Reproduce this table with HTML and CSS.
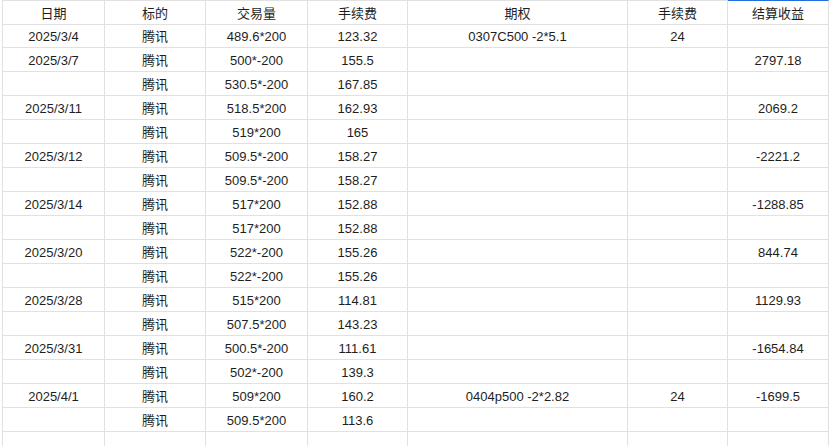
FILE: index.html
```html
<!DOCTYPE html>
<html lang="zh">
<head>
<meta charset="utf-8">
<link rel="stylesheet" href="styles.css">
</head>
<body>
<div class="sheet">
  <div class="cell head">日期</div><div class="cell head">标的</div><div class="cell head">交易量</div><div class="cell head">手续费</div><div class="cell head">期权</div><div class="cell head">手续费</div><div class="cell head active">结算收益</div>

  <div class="cell">2025/3/4</div><div class="cell">腾讯</div><div class="cell">489.6*200</div><div class="cell">123.32</div><div class="cell">0307C500 -2*5.1</div><div class="cell">24</div><div class="cell"></div>
  <div class="cell">2025/3/7</div><div class="cell">腾讯</div><div class="cell">500*-200</div><div class="cell">155.5</div><div class="cell"></div><div class="cell"></div><div class="cell">2797.18</div>
  <div class="cell"></div><div class="cell">腾讯</div><div class="cell">530.5*-200</div><div class="cell">167.85</div><div class="cell"></div><div class="cell"></div><div class="cell"></div>
  <div class="cell">2025/3/11</div><div class="cell">腾讯</div><div class="cell">518.5*200</div><div class="cell">162.93</div><div class="cell"></div><div class="cell"></div><div class="cell">2069.2</div>
  <div class="cell"></div><div class="cell">腾讯</div><div class="cell">519*200</div><div class="cell">165</div><div class="cell"></div><div class="cell"></div><div class="cell"></div>
  <div class="cell">2025/3/12</div><div class="cell">腾讯</div><div class="cell">509.5*-200</div><div class="cell">158.27</div><div class="cell"></div><div class="cell"></div><div class="cell">-2221.2</div>
  <div class="cell"></div><div class="cell">腾讯</div><div class="cell">509.5*-200</div><div class="cell">158.27</div><div class="cell"></div><div class="cell"></div><div class="cell"></div>
  <div class="cell">2025/3/14</div><div class="cell">腾讯</div><div class="cell">517*200</div><div class="cell">152.88</div><div class="cell"></div><div class="cell"></div><div class="cell">-1288.85</div>
  <div class="cell"></div><div class="cell">腾讯</div><div class="cell">517*200</div><div class="cell">152.88</div><div class="cell"></div><div class="cell"></div><div class="cell"></div>
  <div class="cell">2025/3/20</div><div class="cell">腾讯</div><div class="cell">522*-200</div><div class="cell">155.26</div><div class="cell"></div><div class="cell"></div><div class="cell">844.74</div>
  <div class="cell"></div><div class="cell">腾讯</div><div class="cell">522*-200</div><div class="cell">155.26</div><div class="cell"></div><div class="cell"></div><div class="cell"></div>
  <div class="cell">2025/3/28</div><div class="cell">腾讯</div><div class="cell">515*200</div><div class="cell">114.81</div><div class="cell"></div><div class="cell"></div><div class="cell">1129.93</div>
  <div class="cell"></div><div class="cell">腾讯</div><div class="cell">507.5*200</div><div class="cell">143.23</div><div class="cell"></div><div class="cell"></div><div class="cell"></div>
  <div class="cell">2025/3/31</div><div class="cell">腾讯</div><div class="cell">500.5*-200</div><div class="cell">111.61</div><div class="cell"></div><div class="cell"></div><div class="cell">-1654.84</div>
  <div class="cell"></div><div class="cell">腾讯</div><div class="cell">502*-200</div><div class="cell">139.3</div><div class="cell"></div><div class="cell"></div><div class="cell"></div>
  <div class="cell">2025/4/1</div><div class="cell">腾讯</div><div class="cell">509*200</div><div class="cell">160.2</div><div class="cell">0404p500 -2*2.82</div><div class="cell">24</div><div class="cell">-1699.5</div>
  <div class="cell"></div><div class="cell">腾讯</div><div class="cell">509.5*200</div><div class="cell">113.6</div><div class="cell"></div><div class="cell"></div><div class="cell"></div>
  <div class="cell"></div><div class="cell"></div><div class="cell"></div><div class="cell"></div><div class="cell"></div><div class="cell"></div><div class="cell"></div>
</div>
</body>
</html>
```

FILE: styles.css
```css
html, body {
  margin: 0;
  padding: 0;
  background: #ffffff;
  overflow: hidden;
}

body {
  font-family: "Liberation Sans", "Noto Sans CJK SC", sans-serif;
  font-size: 13px;
  color: #1e1e1e;
}

.sheet {
  margin-left: 2px;
  display: grid;
  grid-template-columns: 102px 101px 102px 100px 220px 100px 101px;
  grid-auto-rows: 24px;
  width: 827px;
  border-left: 1px solid #e1e1e1;
  box-sizing: border-box;
}

.cell {
  box-sizing: border-box;
  border-right: 1px solid #e1e1e1;
  border-bottom: 1px solid #e1e1e1;
  display: flex;
  align-items: center;
  justify-content: center;
  white-space: nowrap;
  line-height: 1;
  padding-top: 1px;
}

.head {
  height: 25px;
  border-top: 1px solid #e1e1e1;
}

.head.active {
  border-top-color: #1f6fe0;
}
```
